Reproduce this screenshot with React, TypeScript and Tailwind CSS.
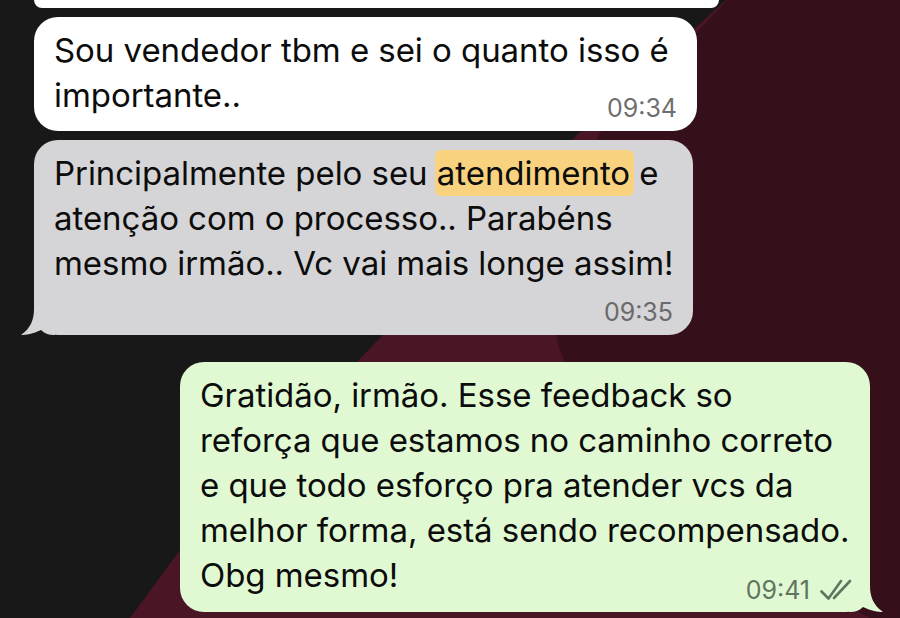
const TailLeft = ({ fill }: { fill: string }) => (
  <svg className="absolute left-[-13px] bottom-0" width="34" height="34" viewBox="0 0 34 34">
    <path d="M13 0 V8 C13 18 10 27 0 34 C 5 34 12 33 20 29 C 24 33 28 34 34 34 V0 Z" fill={fill} />
  </svg>
);

const TailRight = ({ fill }: { fill: string }) => (
  <svg className="absolute right-[-13px] bottom-0" width="34" height="34" viewBox="0 0 34 34">
    <path d="M21 0 V8 C21 18 24 27 34 34 C 29 34 22 33 14 29 C 10 33 6 34 0 34 V0 Z" fill={fill} />
  </svg>
);

const Checks = () => (
  <svg width="32" height="24" viewBox="0 0 32 24" fill="none" stroke="#5f7560" strokeWidth="2.6" strokeLinecap="round" strokeLinejoin="round">
    <path d="M1.5 13.5 L8.5 20.5 L21 3" />
    <path d="M14 20 L30 3" />
  </svg>
);

const App = () => {
  return (
    <div
      className="relative h-[618px] w-[900px] overflow-hidden bg-[#181818] text-[#0c0c0c] text-[33px] leading-[45px] tracking-[-0.05px]"
      style={{ fontFamily: '"Inter", "Liberation Sans", sans-serif' }}
    >
      <svg className="absolute inset-0" width="900" height="618" viewBox="0 0 900 618">
        <path d="M735 -8 L577 135 L373 345 L180 550 L130 618 H900 V-8 Z" fill="#4a1525" />
        <path d="M735 -8 L600 133 C 555 230 548 290 558 345 C 590 440 760 560 870 618 H900 V-8 Z" fill="#35101b" />
      </svg>

      <div className="relative flex flex-col">
        <div className="ml-[34px] h-[8px] w-[685px] rounded-b-[22px] bg-white" />

        <div className="relative ml-[34px] mt-[9px] h-[114px] w-[663px] rounded-[24px] bg-white pl-[20px] pt-[11px]">
          <div className="whitespace-nowrap">Sou vendedor tbm e sei o quanto isso é</div>
          <div className="whitespace-nowrap">importante..</div>
          <span className="absolute bottom-[8px] right-[20px] text-[25px] leading-[30px] tracking-normal text-[#6f6f6f]">09:34</span>
        </div>

        <div className="relative ml-[34px] mt-[9px] h-[195px] w-[659px] rounded-[24px] bg-[#d5d4d6] pl-[20px] pt-[11px]">
          <TailLeft fill="#d5d4d6" />
          <div className="relative whitespace-nowrap">
            Principalmente pelo seu{" "}
            <span className="-ml-[2px] -mr-[4px] rounded-[6px] bg-[#f9d27f] pl-[2px] pr-[4px] py-[3px]">atendimento</span> e
          </div>
          <div className="relative whitespace-nowrap">atenção com o processo.. Parabéns</div>
          <div className="relative whitespace-nowrap">mesmo irmão.. Vc vai mais longe assim!</div>
          <span className="absolute bottom-[8px] right-[20px] text-[25px] leading-[30px] tracking-normal text-[#6a6a6a]">09:35</span>
        </div>

        <div className="relative ml-[180px] mt-[27px] h-[250px] w-[690px] rounded-[24px] bg-[#e0f9d2] pl-[20px] pt-[11px]">
          <TailRight fill="#e0f9d2" />
          <div className="relative whitespace-nowrap">Gratidão, irmão. Esse feedback so</div>
          <div className="relative whitespace-nowrap">reforça que estamos no caminho correto</div>
          <div className="relative whitespace-nowrap">e que todo esforço pra atender vcs da</div>
          <div className="relative whitespace-nowrap">melhor forma, está sendo recompensado.</div>
          <div className="relative whitespace-nowrap">Obg mesmo!</div>
          <div className="absolute bottom-[7px] right-[18px] flex items-center gap-[10px]">
            <span className="text-[25px] leading-[30px] tracking-normal text-[#5f7560]">09:41</span>
            <Checks />
          </div>
        </div>
      </div>
    </div>
  );
};

export default App;
